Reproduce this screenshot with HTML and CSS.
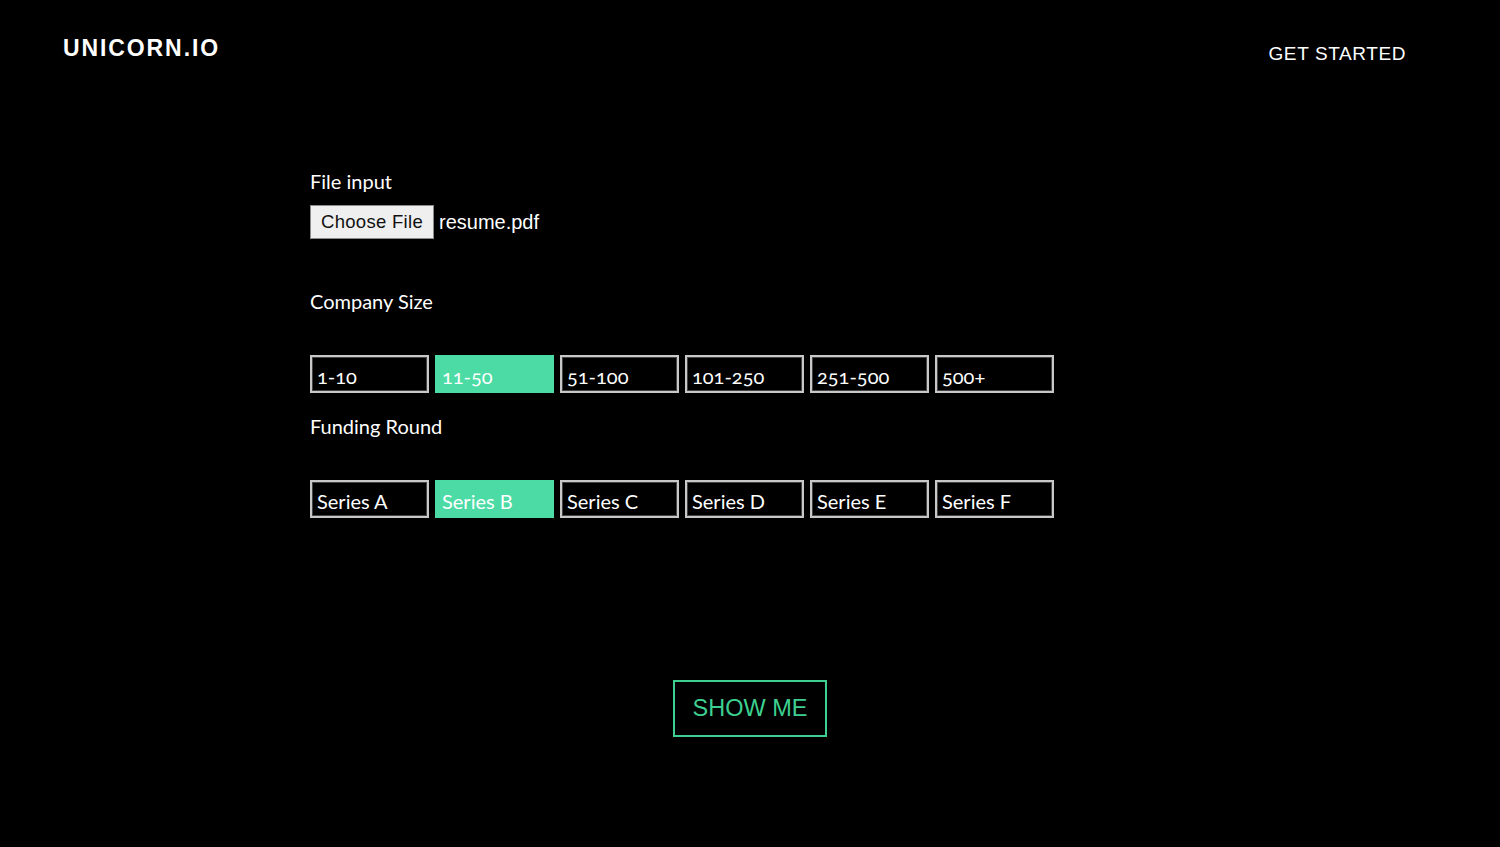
FILE: index.html
```html
<!DOCTYPE html>
<html>
<head>
<meta charset="utf-8">
<link rel="stylesheet" href="styles.css">
</head>
<body>
<header class="top">
  <div class="logo">UNICORN.IO</div>
  <a class="cta">GET STARTED</a>
</header>
<main class="form">
  <div class="label first">File input</div>
  <div class="file-row">
    <span class="file-btn">Choose File</span>
    <span class="file-name">resume.pdf</span>
  </div>
  <div class="label section">Company Size</div>
  <div class="options">
    <div class="opt">1-10</div>
    <div class="opt on">11-50</div>
    <div class="opt">51-100</div>
    <div class="opt">101-250</div>
    <div class="opt">251-500</div>
    <div class="opt">500+</div>
  </div>
  <div class="label section2">Funding Round</div>
  <div class="options">
    <div class="opt">Series A</div>
    <div class="opt on">Series B</div>
    <div class="opt">Series C</div>
    <div class="opt">Series D</div>
    <div class="opt">Series E</div>
    <div class="opt">Series F</div>
  </div>
  <div class="submit-row">
    <button class="show">SHOW ME</button>
  </div>
</main>
</body>
</html>
```

FILE: styles.css
```css
html, body {
  margin: 0;
  padding: 0;
  background: #000;
  color: #fff;
  height: 100%;
}
body {
  font-family: Lato, "Open Sans", sans-serif;
}
.top {
  display: flex;
  justify-content: space-between;
  align-items: flex-start;
  padding: 36px 94px 0 63px;
  height: 40px;
}
.logo {
  font-family: "Liberation Sans", Arial, sans-serif;
  font-weight: bold;
  font-size: 23px;
  letter-spacing: 1.9px;
  line-height: 24px;
}
.cta {
  font-family: "Liberation Sans", Arial, sans-serif;
  font-size: 19px;
  letter-spacing: 0.6px;
  line-height: 24px;
  margin-top: 6px;
  color: #fff;
}
.form {
  padding-left: 310px;
  display: flex;
  flex-direction: column;
}
.label {
  font-size: 20px;
  line-height: 24px;
  color: #fff;
}
.first { margin-top: 93px; }
.file-row {
  display: flex;
  align-items: center;
  margin-top: 12px;
  gap: 5px;
}
.file-btn {
  box-sizing: border-box;
  height: 34px;
  width: 124px;
  background: #efefef;
  border: 1px solid #8a8a8a;
  color: #111;
  font-family: "Liberation Sans", Arial, sans-serif;
  font-size: 18.5px;
  letter-spacing: 0.3px;
  display: flex;
  align-items: center;
  justify-content: center;
}
.file-name {
  font-family: "Liberation Sans", Arial, sans-serif;
  font-size: 20px;
  color: #fff;
}
.section { margin-top: 50px; }
.section2 { margin-top: 21px; }
.options {
  display: flex;
  gap: 6px;
  margin-top: 42px;
}
.opt {
  box-sizing: border-box;
  width: 119px;
  height: 38px;
  border: 2px solid #c8c8c8;
  box-shadow: inset 0 0 0 1px #444;
  padding: 7px 0 0 5px;
  font-size: 20px;
  line-height: 24px;
  font-variant-numeric: oldstyle-nums;
  color: #fff;
}
.opt.on {
  background: #4cdba5;
  border-color: #4cdba5;
  box-shadow: none;
  color: #fff;
}
.submit-row {
  display: flex;
  justify-content: center;
  margin-top: 162px;
  padding-right: 310px;
}
.show {
  box-sizing: border-box;
  width: 154px;
  height: 57px;
  background: #000;
  border: 2px solid #3dcf90;
  color: #3dcf90;
  font-family: "Liberation Sans", Arial, sans-serif;
  font-size: 23.5px;
  letter-spacing: 0;
  padding: 0;
}
```
